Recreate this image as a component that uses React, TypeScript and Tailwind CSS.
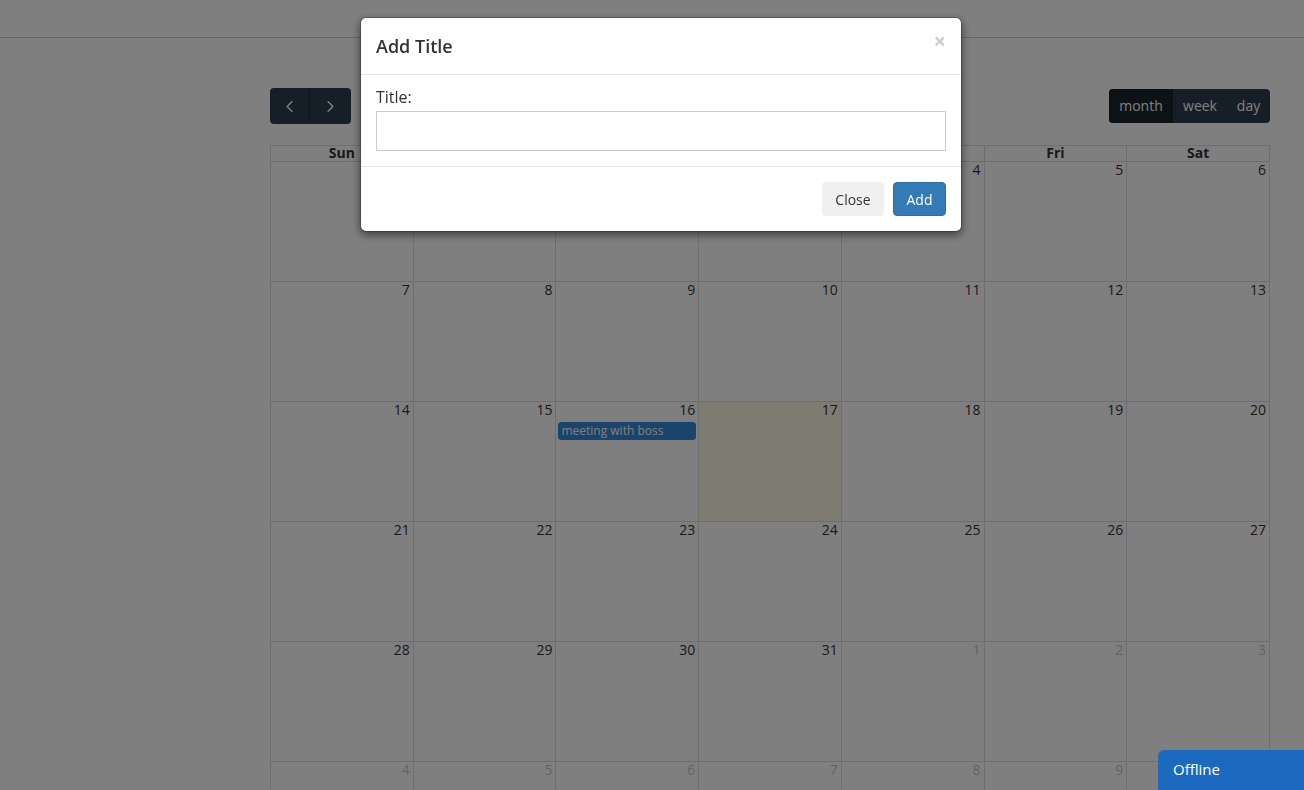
import {ChevronLeft, ChevronRight} from 'lucide-react';

const DAYS = ['Sun', 'Mon', 'Tue', 'Wed', 'Thu', 'Fri', 'Sat'];

type Cell = {day: number; other?: boolean; today?: boolean; events?: string[]};

// July layout: month starts on Monday, 31 days, today = 17
function buildWeeks(): Cell[][] {
  const cells: Cell[] = [{day: 30, other: true}];
  for (let d = 1; d <= 31; d++) {
    cells.push({day: d, today: d === 17, events: d === 16 ? ['meeting with boss'] : undefined});
  }
  let next = 1;
  while (cells.length < 42) cells.push({day: next++, other: true});
  const weeks: Cell[][] = [];
  for (let i = 0; i < 42; i += 7) weeks.push(cells.slice(i, i + 7));
  return weeks;
}

function DayCell({cell}: {cell: Cell}) {
  return (
    <div className={`h-[120px] border-r border-b border-[#dddddd] ${cell.today ? 'bg-[#fcf8e3]' : ''}`}>
      <div
        className={`text-right text-[14px] leading-[16px] pt-0 pr-[3px] ${
          cell.other ? 'text-[#333333]/30' : 'text-[#333333]'
        }`}
      >
        {cell.day}
      </div>
      {cell.events?.map(ev => (
        <div
          key={ev}
          className="mt-[4px] ml-[2px] mr-[2px] h-[18px] rounded-[3px] bg-[#3788d8] border border-[#3788d8] text-white text-[12px] leading-[16px] pl-[2px] truncate"
        >
          {ev}
        </div>
      ))}
    </div>
  );
}

function Calendar() {
  const weeks = buildWeeks();
  return (
    <div className="ml-[270px] w-[1000px]">
      <div className="flex items-center justify-between mt-[50px] mb-[21px]">
        <div className="flex h-[36px] rounded-[4px] overflow-hidden bg-[#2c3e50] text-white">
          <button className="w-[40px] flex items-center justify-center border-r border-[#1e2b37]">
            <ChevronLeft className="w-[19px] h-[19px]" strokeWidth={1.8} />
          </button>
          <button className="w-[41px] flex items-center justify-center">
            <ChevronRight className="w-[19px] h-[19px]" strokeWidth={1.8} />
          </button>
        </div>
        <div className="flex h-[34px] rounded-[4px] overflow-hidden bg-[#2c3e50] text-white text-[14px] leading-[32px]">
          <button className="w-[64px] bg-[#1a252f]">month</button>
          <button className="w-[54px]">week</button>
          <button className="w-[43px]">day</button>
        </div>
      </div>
      <div className="border-l border-t border-[#dddddd]">
        <div className="grid grid-cols-7">
          {DAYS.map(d => (
            <div
              key={d}
              className="h-[16px] border-r border-b border-[#dddddd] text-center text-[14px] leading-[13px] font-bold text-[#333333]"
            >
              {d}
            </div>
          ))}
        </div>
        {weeks.map((w, i) => (
          <div key={i} className="grid grid-cols-7">
            {w.map((c, j) => (
              <DayCell key={j} cell={c} />
            ))}
          </div>
        ))}
      </div>
    </div>
  );
}

function AddTitleModal() {
  return (
    <div className="fixed inset-0 bg-black/50">
      <div className="ml-[360px] mt-[17px] w-[602px] bg-white rounded-[6px] border border-black/20 shadow-[0_3px_9px_rgba(0,0,0,0.5)] bg-clip-padding">
        <div className="flex items-start justify-between px-[15px] pt-[15px] pb-[15px] border-b border-[#e5e5e5]">
          <h4 className="text-[18px] leading-[26px] font-semibold text-[#333333]">Add Title</h4>
          <button className="text-[22px] leading-[21px] font-bold text-black/20 -mt-[3px]">×</button>
        </div>
        <div className="px-[15px] pt-[12px] pb-[15px]">
          <label className="block text-[16px] leading-[20px] text-[#333333] mb-[4px]">Title:</label>
          <input className="block w-full h-[40px] border border-[#cccccc] px-3 text-[14px] outline-none" />
        </div>
        <div className="flex justify-end gap-[9px] p-[15px] border-t border-[#e5e5e5]">
          <button className="h-[34px] w-[62px] rounded-[4px] bg-[#f0f0f0] text-[14px] text-[#333333]">Close</button>
          <button className="h-[34px] w-[53px] rounded-[4px] bg-[#337ab7] border border-[#2e6da4] text-[14px] text-white">
            Add
          </button>
        </div>
      </div>
    </div>
  );
}

export default function App() {
  return (
    <div className="h-[790px] bg-white font-['Open_Sans',sans-serif] text-[#333333] overflow-hidden">
      <div className="h-[38px] border-b border-[#d0d0d0]" />
      <Calendar />
      <AddTitleModal />
      <div className="fixed bottom-0 right-0 w-[146px] h-[40px] bg-[#1b6ac0] rounded-tl-[6px] text-white text-[15px] leading-[38px] pl-[15px]">
        Offline
      </div>
    </div>
  );
}
